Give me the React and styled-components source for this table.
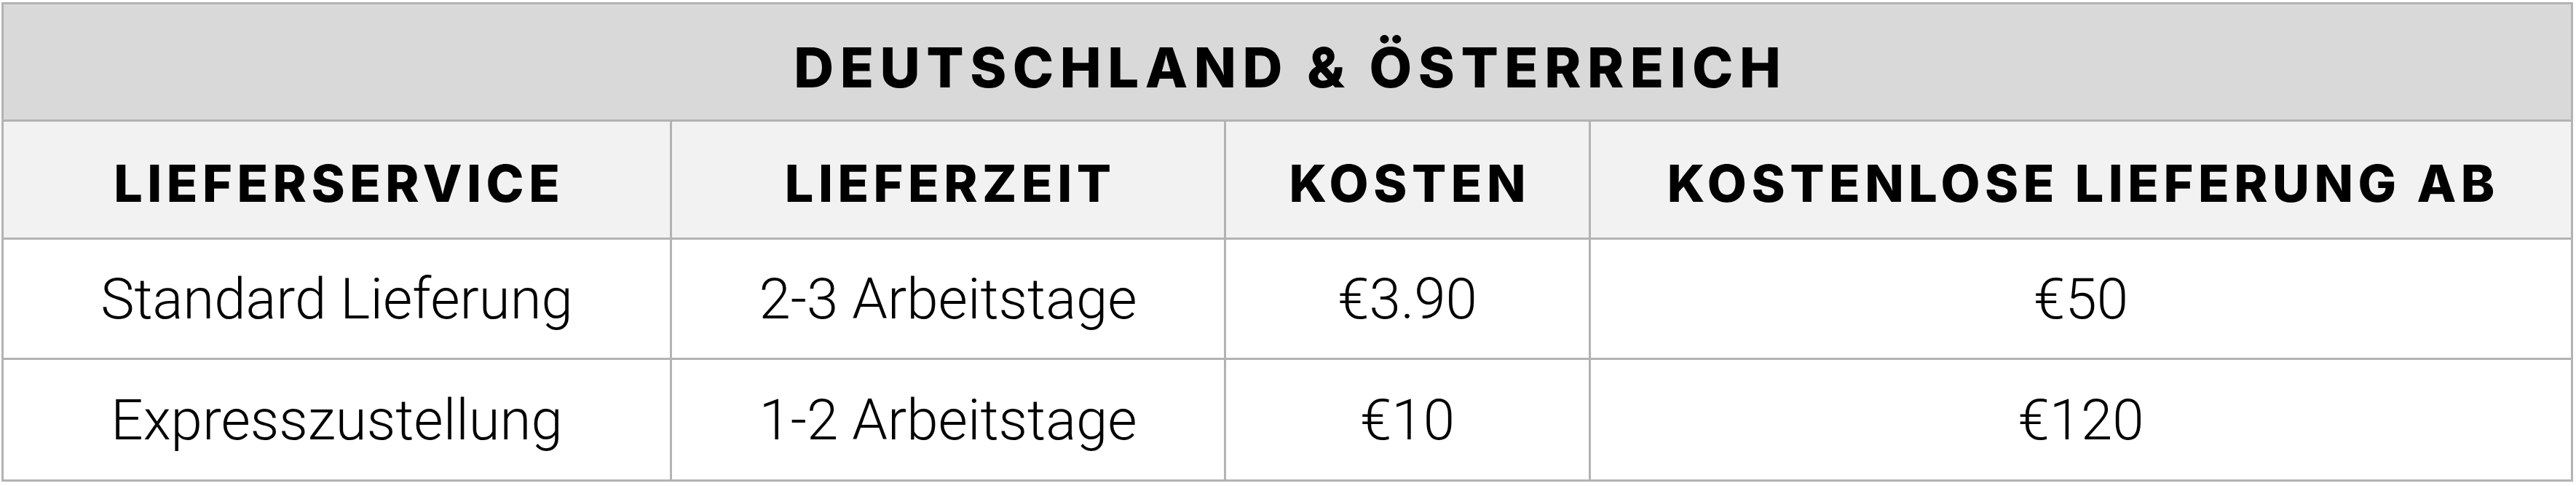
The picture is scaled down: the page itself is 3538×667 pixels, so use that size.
import React from "react";
import styled, { createGlobalStyle } from "styled-components";

const Global = createGlobalStyle`
  html, body { margin: 0; padding: 0; background: #ffffff; }
  body { font-family: "Roboto", "Liberation Sans", sans-serif; }
`;

const Page = styled.div`
  padding: 3px 0 0 2px;
`;

const Table = styled.table`
  width: 3532px;
  table-layout: fixed;
  border-collapse: separate;
  border-spacing: 0;
  border-top: 3px solid #b3b3b3;
  border-left: 3px solid #b3b3b3;
`;

const Cell = styled.td`
  box-sizing: border-box;
  padding: 0;
  border-right: 3px solid #b3b3b3;
  border-bottom: 3px solid #b3b3b3;
  text-align: center;
  vertical-align: middle;
  color: #000;
  height: ${(p) => p.$h}px;
`;

const TitleCell = styled(Cell).attrs({ as: "th" })`
  background: #d9d9d9;
  font-family: "Inter", "Open Sans", sans-serif;
  font-weight: 800;
  font-size: 76px;
  letter-spacing: 8.5px;
  padding: 14px 0 0 8.5px;
`;

const HeadCell = styled(Cell).attrs({ as: "th" })`
  background: #f2f2f2;
  font-family: "Inter", "Open Sans", sans-serif;
  font-weight: 800;
  font-size: 70px;
  letter-spacing: 6.5px;
  padding: 10px 0 0 6.5px;
`;

const DataCell = styled(Cell)`
  background: #ffffff;
  font-family: "Roboto", "Liberation Sans", sans-serif;
  font-weight: 300;
  font-size: 78px;
`;

const cols = [918, 761, 501, 1349];
const heads = ["LIEFERSERVICE", "LIEFERZEIT", "KOSTEN", "KOSTENLOSE LIEFERUNG AB"];
const rows = [
  { h: 165, cells: ["Standard Lieferung", "2-3 Arbeitstage", "€3.90", "€50"] },
  { h: 167, cells: ["Expresszustellung", "1-2 Arbeitstage", "€10", "€120"] },
];

export default function App() {
  return (
    <Page>
      <Global />
      <Table>
        <colgroup>
          {cols.map((w, i) => (
            <col key={i} style={{ width: w }} />
          ))}
        </colgroup>
        <thead>
          <tr>
            <TitleCell colSpan={4} $h={161}>DEUTSCHLAND &amp; ÖSTERREICH</TitleCell>
          </tr>
          <tr>
            {heads.map((t) => (
              <HeadCell key={t} $h={162}>{t}</HeadCell>
            ))}
          </tr>
        </thead>
        <tbody>
          {rows.map((r) => (
            <tr key={r.cells[0]}>
              {r.cells.map((c, i) => (
                <DataCell key={i} $h={r.h}>{c}</DataCell>
              ))}
            </tr>
          ))}
        </tbody>
      </Table>
    </Page>
  );
}
